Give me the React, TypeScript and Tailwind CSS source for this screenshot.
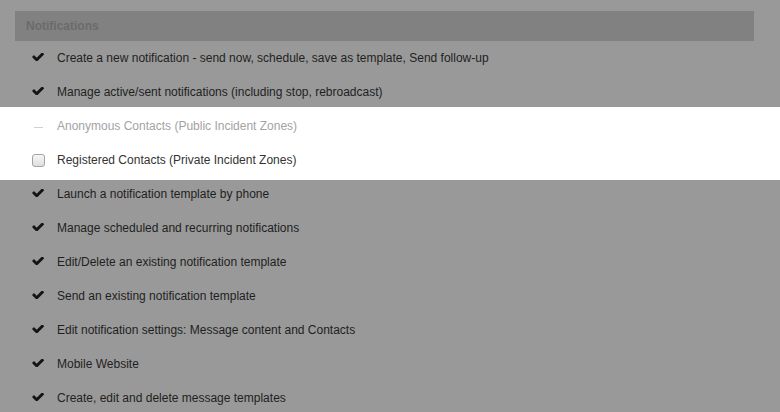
import React from "react";

type Item = { label: string; state: "on" | "off" | "na" };

const before: Item[] = [
  { label: "Create a new notification - send now, schedule, save as template, Send follow-up", state: "on" },
  { label: "Manage active/sent notifications (including stop, rebroadcast)", state: "on" },
];

const after: Item[] = [
  { label: "Launch a notification template by phone", state: "on" },
  { label: "Manage scheduled and recurring notifications", state: "on" },
  { label: "Edit/Delete an existing notification template", state: "on" },
  { label: "Send an existing notification template", state: "on" },
  { label: "Edit notification settings: Message content and Contacts", state: "on" },
  { label: "Mobile Website", state: "on" },
  { label: "Create, edit and delete message templates", state: "on" },
];

function Check() {
  return (
    <svg width="12" height="8" viewBox="93 430 1578 996" className="-mt-[2px] block">
      <path
        fill="#141414"
        d="M1671 566q0 40-28 68l-724 724-136 136q-28 28-68 28t-68-28l-136-136-362-362q-28-28-28-68t28-68l136-136q28-28 68-28t68 28l294 295 656-657q28-28 68-28t68 28l136 136q28 28 28 68z"
      />
    </svg>
  );
}

function Row({ item, lit }: { item: Item; lit?: boolean }) {
  return (
    <div className="flex h-[34px] items-center">
      <div className="flex w-[57px] pl-[32px]">
        {item.state === "on" && <Check />}
        {item.state === "na" && <div className="ml-[2px] mt-[3px] h-px w-[9px] bg-[#d0d0d0]" />}
        {item.state === "off" && (
          <div className="h-[13px] w-[13px] rounded-[3px] border border-[#a3a3a3] bg-gradient-to-b from-[#f7f7f7] to-[#dedede]" />
        )}
      </div>
      <span
        className={
          lit
            ? item.state === "na"
              ? "text-[12px] text-[#a3a3a3]"
              : "text-[12px] text-[#333333]"
            : "text-[12px] text-[#1f1f1f]"
        }
      >
        {item.label}
      </span>
    </div>
  );
}

export default function App() {
  return (
    <div
      className="h-[412px] w-[780px] overflow-hidden bg-[#999999] pt-[11px]"
      style={{ fontFamily: '"Liberation Sans", Arial, sans-serif' }}
    >
      <div className="ml-[15px] flex h-[30px] w-[739px] items-center bg-[#818181] pl-[11px] text-[12px] font-bold text-[#6b6b6b]">
        Notifications
      </div>

      <div>
        {before.map((it) => (
          <Row key={it.label} item={it} />
        ))}

        {/* highlighted block */}
        <div className="relative -mb-[3px] -mt-[2px] bg-white pb-[3px] pt-[2px]">
          <Row item={{ label: "Anonymous Contacts (Public Incident Zones)", state: "na" }} lit />
          <Row item={{ label: "Registered Contacts (Private Incident Zones)", state: "off" }} lit />
        </div>

        {after.map((it) => (
          <Row key={it.label} item={it} />
        ))}
      </div>
    </div>
  );
}
